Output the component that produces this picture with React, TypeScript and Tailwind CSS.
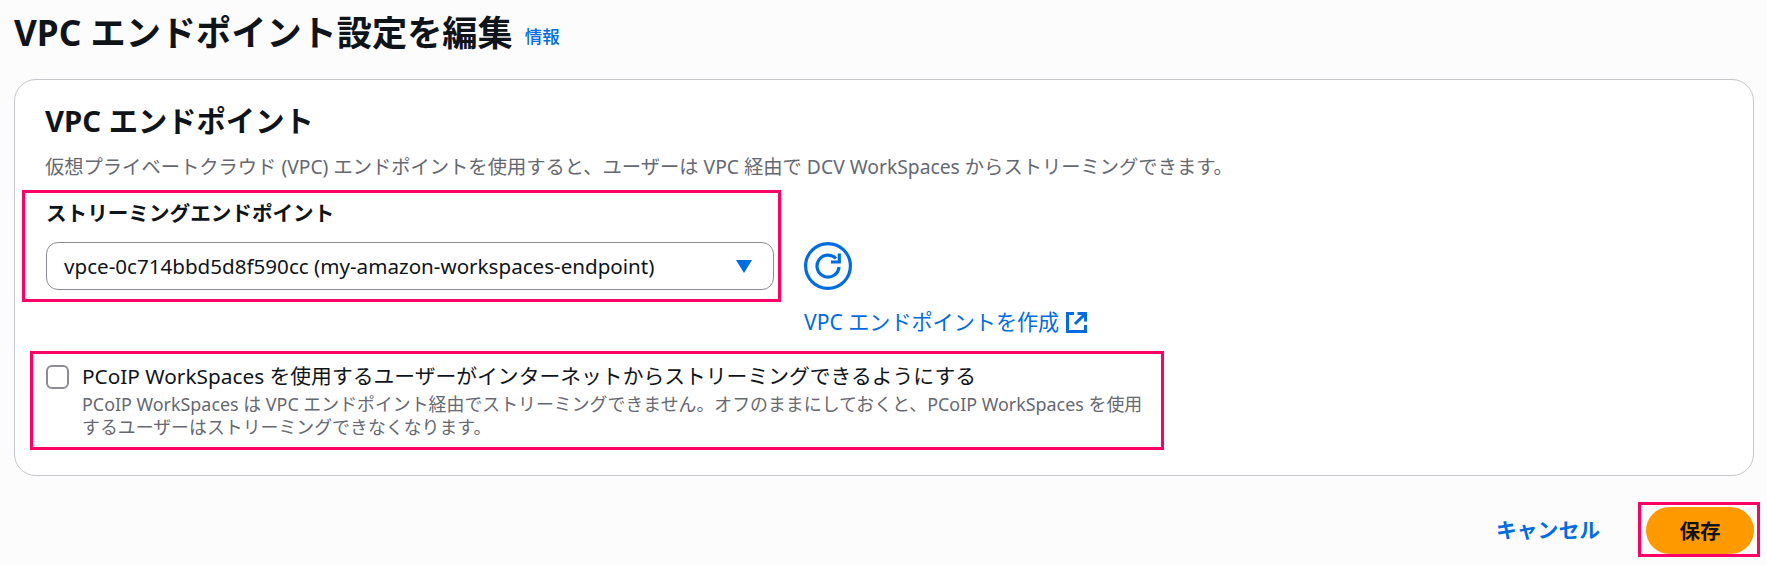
const font = 'font-["Noto_Sans","Noto_Sans_CJK_JP",sans-serif]';

function RefreshIcon() {
  return (
    <svg viewBox="0 0 48 48" className="h-[48px] w-[48px]" fill="none" stroke="#006ce0" strokeWidth="3.2">
      <circle cx="24" cy="24" r="22.4" />
      <path d="M35 25A11 11 0 1 1 32 16.5" />
      <path d="M35.3 11.5V20H27" />
    </svg>
  );
}

function ExternalIcon() {
  return (
    <svg viewBox="0 0 21 21" className="h-[21px] w-[21px]" fill="none" stroke="#006ce0" strokeWidth="3">
      <path d="M8 1.5H1.5v18h18V13" />
      <path d="M11.5 1.5h8v8M19.5 1.5L9 12" />
    </svg>
  );
}

export default function App() {
  return (
    <div className={`${font} h-[565px] w-[1767px] overflow-hidden bg-[#fcfcfc] text-[#0f141a]`}>
      {/* Page title */}
      <div className="flex h-[79px] items-start pl-[14px] pt-[8px]">
        <h1 className="text-[35.2px] font-bold leading-[48px]">VPC エンドポイント設定を編集</h1>
        <a className="ml-[12px] mt-[15px] text-[17.5px] font-medium leading-[26px] text-[#006ce0]">情報</a>
      </div>

      {/* Card */}
      <div className="ml-[14px] flex h-[397px] w-[1740px] flex-col rounded-[22px] border border-[#c6c6cd] bg-white pl-[30px] pt-[22px]">
        <h2 className="text-[29.3px] font-bold leading-[38px]">VPC エンドポイント</h2>
        <p className="mt-[13px] text-[19.3px] leading-[28px] text-[#656871]">
          仮想プライベートクラウド (VPC) エンドポイントを使用すると、ユーザーは VPC 経由で DCV WorkSpaces からストリーミングできます。
        </p>

        <div className="mt-[9px] flex items-start">
          <div className="-ml-[23px] h-[112px] w-[759px] border-[3px] border-[#ff0066] pl-[21px] pt-[6px]">
            <div className="text-[20.6px] font-bold leading-[28px]">ストリーミングエンドポイント</div>
            <div className="mt-[15px] flex h-[48px] w-[728px] items-center justify-between rounded-[12px] border border-[#8c8c94] pl-[17px] pr-[21px] text-[20.6px]">
              <span className="whitespace-nowrap">vpce-0c714bbd5d8f590cc (my-amazon-workspaces-endpoint)</span>
              <svg viewBox="0 0 16 13" className="h-[13px] w-[16px]" fill="#006ce0">
                <path d="M0 0h16L8 13z" />
              </svg>
            </div>
          </div>
          <div className="ml-[23px] flex flex-col pt-[52px]">
            <RefreshIcon />
            <a className="mt-[18px] flex h-[28px] items-center gap-[7px] whitespace-nowrap text-[21.1px] leading-[28px] text-[#006ce0]">
              VPC エンドポイントを作成
              <ExternalIcon />
            </a>
          </div>
        </div>

        <div className="-ml-[15px] mt-[15px] flex h-[99px] w-[1134px] items-start gap-[13px] border-[3px] border-[#ff0066] pl-[13px] pt-[9px]">
          <span className="mt-[2px] h-[24px] w-[23px] shrink-0 rounded-[6px] border-2 border-[#8c8c94] bg-white" />
          <div>
            <div className="whitespace-nowrap text-[20.8px] leading-[26px]">
              PCoIP WorkSpaces を使用するユーザーがインターネットからストリーミングできるようにする
            </div>
            <div className="mt-[4px] whitespace-nowrap text-[17.9px] leading-[23px] text-[#656871]">
              PCoIP WorkSpaces は VPC エンドポイント経由でストリーミングできません。オフのままにしておくと、PCoIP WorkSpaces を使用
              <br />
              するユーザーはストリーミングできなくなります。
            </div>
          </div>
        </div>
      </div>

      {/* Footer actions */}
      <div className="mt-[26px] flex items-center justify-end gap-[38px] pr-[7px]">
        <a className="text-[20.8px] font-bold leading-[28px] text-[#006ce0]">キャンセル</a>
        <div className="h-[55px] w-[122px] border-[3px] border-[#ff0066] pl-[5px] pt-[2px]">
          <button className="h-[47px] w-[108px] rounded-full bg-[#ff9900] text-[20.6px] font-bold leading-[28px] text-[#0f141a]">
            保存
          </button>
        </div>
      </div>
    </div>
  );
}
